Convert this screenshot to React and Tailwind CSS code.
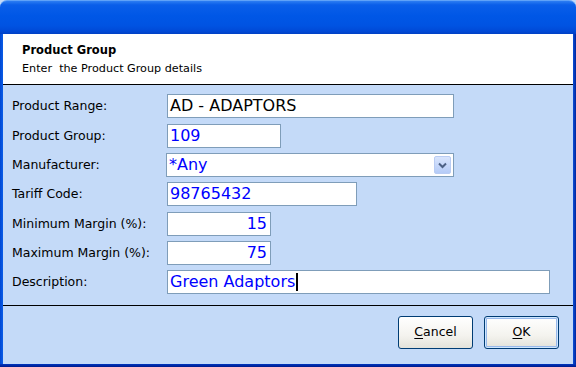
const font = { fontFamily: '"DejaVu Sans", Tahoma, sans-serif' };

function Field({ label, width, value, align = "left", caret = false, top = "mt-[5px]", select = false }) {
  return (
    <div className={`flex items-center ${top}`}>
      <div className="w-[155px] text-[12.5px] text-black">{label}</div>
      <div
        className={`relative flex h-[24px] items-center border border-[#7f9db9] bg-white px-[2px] text-[16px] text-[#0000ff] ${width} ${
          align === "right" ? "justify-end pr-[3px]" : ""
        }`}
      >
        <span className="whitespace-pre leading-none">{value}</span>
        {caret && <span className="ml-[1px] h-[18px] w-[2px] bg-black" />}
        {select && (
          <div className="absolute right-[2px] top-[2px] flex h-[18px] w-[17px] items-center justify-center rounded-[2px] border border-[#b9ccf3] bg-[linear-gradient(to_bottom,#d9e5fd,#b5cbf7)]">
            <svg width="9" height="7" viewBox="0 0 9 7">
              <path d="M1 1.5 L4.5 5 L8 1.5" fill="none" stroke="#4d6185" strokeWidth="2" />
            </svg>
          </div>
        )}
      </div>
    </div>
  );
}

function XpButton({ children, focused }) {
  return (
    <button
      className={`h-[33px] w-[75px] rounded-[3px] border border-[#003c74] bg-[linear-gradient(to_bottom,#ffffff,#f4f3ee_60%,#e3e2da)] text-[12.5px] text-black ${
        focused ? "shadow-[inset_0_0_0_1px_#cee7ff,inset_0_0_0_2px_#98b8ea]" : ""
      }`}
    >
      {children}
    </button>
  );
}

export default function App() {
  return (
    <div className="flex h-[367px] w-[576px] flex-col overflow-hidden bg-[#c4daf8]" style={font}>
      <div className="h-[34px] rounded-t-[7px] border-t border-[#5fa2f8] bg-[linear-gradient(to_bottom,#2c7df2_0%,#0a5ee9_12%,#0057e6_45%,#0053e2_75%,#0049d6_92%,#0040c4_100%)]" />
      <div className="flex flex-1">
        <div className="w-[3px] bg-[linear-gradient(to_right,#0047d2,#0a5de8)]" />
        <div className="flex flex-1 flex-col">
          <div className="h-[51px] border-b border-black bg-white pl-[19px] pt-[8px]">
            <div className="text-[11.5px] font-bold leading-[16px] text-black">Product Group</div>
            <div className="mt-[3px] whitespace-pre text-[11.2px] leading-[15px] text-black">Enter  the Product Group details</div>
          </div>
          <div className="h-[220px] bg-[#c4daf8] pl-[9px] pt-[9px]">
            <Field label="Product Range:" width="w-[287px]" value={<span className="text-black">AD - ADAPTORS</span>} top="" />
            <Field label="Product Group:" width="w-[114px]" value="109" top="mt-[6px]" />
            <Field label="Manufacturer:" width="w-[288px] -ml-[1px]" value="*Any" select />
            <Field label="Tariff Code:" width="w-[190px]" value="98765432" />
            <Field label="Minimum Margin (%):" width="w-[104px]" value="15" align="right" top="mt-[6px]" />
            <Field label="Maximum Margin (%):" width="w-[104px]" value="75" align="right" />
            <Field label="Description:" width="w-[383px]" value="Green Adaptors" caret />
          </div>
          <div className="flex flex-1 justify-end gap-[11px] border-t border-black bg-[#c4daf8] pr-[14px] pt-[10px]">
            <XpButton>
              <span className="underline underline-offset-2">C</span>ancel
            </XpButton>
            <XpButton focused>
              <span className="underline underline-offset-2">O</span>K
            </XpButton>
          </div>
        </div>
        <div className="w-[3px] bg-[linear-gradient(to_right,#0a4fd8,#00259c)]" />
      </div>
      <div className="h-[3px] bg-[linear-gradient(to_bottom,#0036c0,#001a8a)]" />
    </div>
  );
}
